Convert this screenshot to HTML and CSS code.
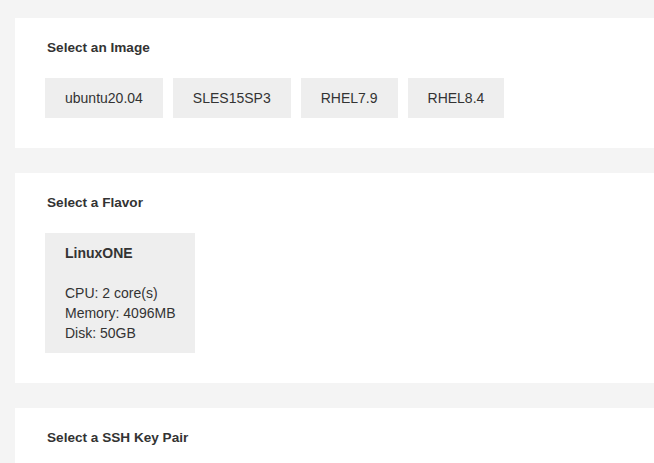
FILE: index.html
```html
<!DOCTYPE html>
<html>
<head>
<meta charset="utf-8">
<link rel="stylesheet" href="styles.css">
</head>
<body>
<div class="page">
  <section class="panel">
    <h2 class="panel-title">Select an Image</h2>
    <div class="options">
      <button class="option">ubuntu20.04</button>
      <button class="option">SLES15SP3</button>
      <button class="option">RHEL7.9</button>
      <button class="option">RHEL8.4</button>
    </div>
  </section>
  <section class="panel">
    <h2 class="panel-title">Select a Flavor</h2>
    <div class="options">
      <div class="flavor">
        <div class="flavor-name">LinuxONE</div>
        <div class="flavor-blank">&nbsp;</div>
        <div>CPU: 2 core(s)</div>
        <div>Memory: 4096MB</div>
        <div>Disk: 50GB</div>
      </div>
    </div>
  </section>
  <section class="panel">
    <h2 class="panel-title">Select a SSH Key Pair</h2>
  </section>
</div>
</body>
</html>
```
FILE: styles.css
```css
html, body {
  margin: 0;
  padding: 0;
  background: #f4f4f4;
  font-family: "Liberation Sans", Arial, sans-serif;
  color: #333333;
  overflow: hidden;
}
.page {
  padding: 18px 0 0 15px;
  display: flex;
  flex-direction: column;
  gap: 25px;
}
.panel {
  background: #ffffff;
  padding: 20px 30px 30px;
}
.panel-title {
  margin: 0 0 20px 2px;
  font-size: 13.6px;
  font-weight: bold;
  line-height: 20px;
}
.options {
  display: flex;
  gap: 10px;
}
.option {
  background: #eeeeee;
  border: none;
  margin: 0;
  height: 40px;
  padding: 0 20px;
  font-family: inherit;
  font-size: 14px;
  color: #333333;
}
.flavor {
  background: #eeeeee;
  padding: 10px 20px;
  font-size: 14px;
  line-height: 20px;
}
.flavor-name {
  font-weight: bold;
}
```
